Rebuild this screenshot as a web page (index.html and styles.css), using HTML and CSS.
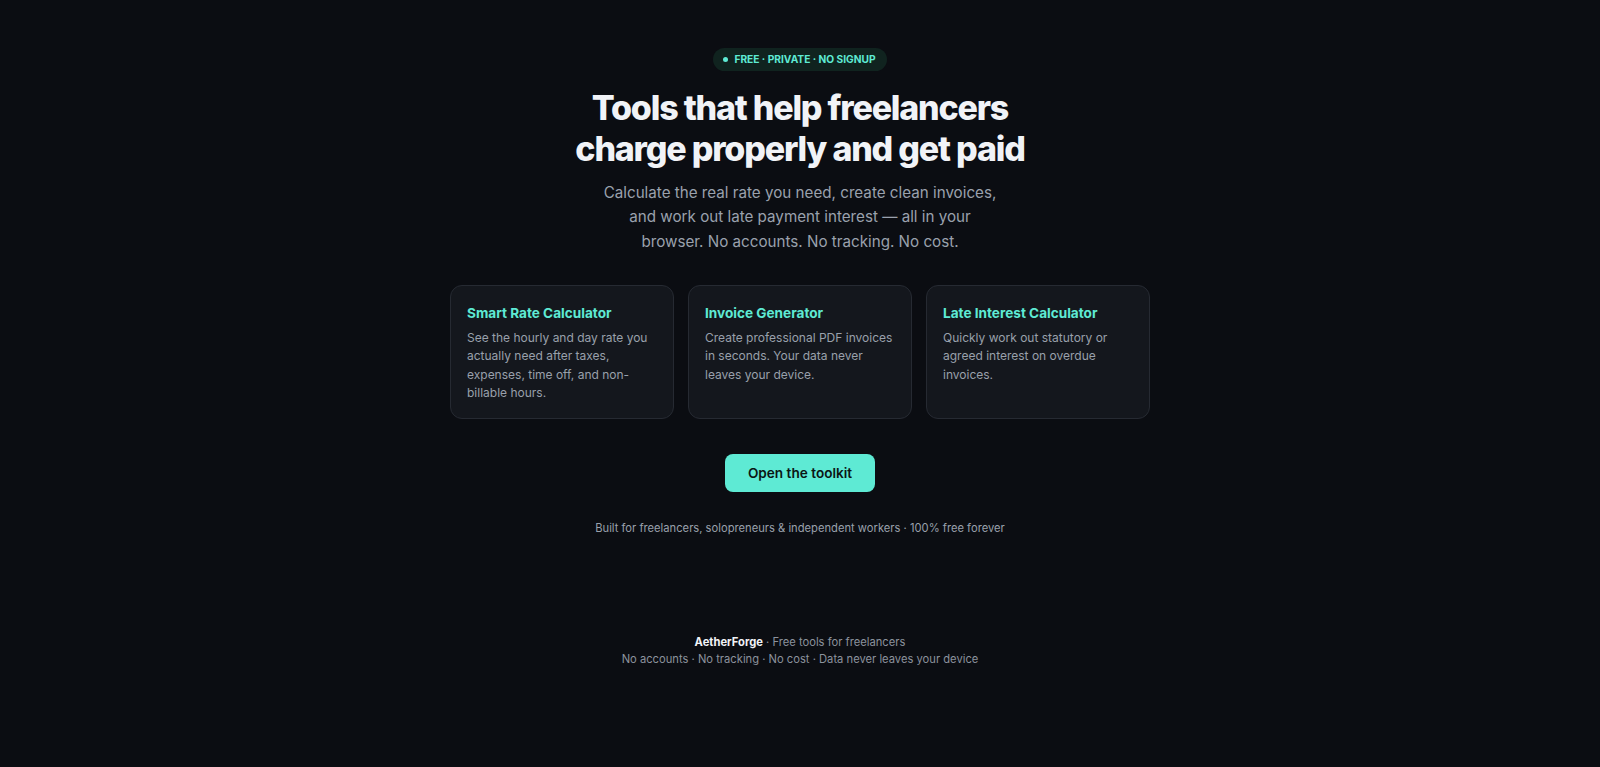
FILE: index.html
```html
<!DOCTYPE html>
<html lang="en">
<head>
<meta charset="utf-8">
<title>AetherForge</title>
<link rel="stylesheet" href="styles.css">
</head>
<body>
<div class="page">
  <main class="hero">
    <div class="badge"><span class="dot"></span>FREE · PRIVATE · NO SIGNUP</div>
    <h1 class="title">Tools that help freelancers<br>charge properly and get paid</h1>
    <p class="lead">Calculate the real rate you need, create clean invoices, and work out late payment interest — all in your browser. No accounts. No tracking. No cost.</p>
    <div class="cards">
      <div class="card">
        <h2 class="card-title">Smart Rate Calculator</h2>
        <p class="card-text">See the hourly and day rate you actually need after taxes, expenses, time off, and non-billable hours.</p>
      </div>
      <div class="card">
        <h2 class="card-title">Invoice Generator</h2>
        <p class="card-text">Create professional PDF invoices in seconds. Your data never leaves your device.</p>
      </div>
      <div class="card">
        <h2 class="card-title">Late Interest Calculator</h2>
        <p class="card-text">Quickly work out statutory or agreed interest on overdue invoices.</p>
      </div>
    </div>
    <a class="cta" href="#">Open the toolkit</a>
    <p class="tagline">Built for freelancers, solopreneurs &amp; independent workers · 100% free forever</p>
  </main>
  <footer class="footer">
    <p><strong>AetherForge</strong> · Free tools for freelancers</p>
    <p>No accounts · No tracking · No cost · Data never leaves your device</p>
  </footer>
</div>
</body>
</html>
```
FILE: styles.css
```css
html, body {
  margin: 0;
  padding: 0;
  background: #0b0d12;
}
body {
  font-family: Inter, "Noto Sans", sans-serif;
  color: #e6e8ec;
  min-height: 767px;
}
.page {
  display: flex;
  flex-direction: column;
  align-items: center;
}
.hero {
  display: flex;
  flex-direction: column;
  align-items: center;
  padding-top: 47.5px;
}
.badge {
  display: flex;
  align-items: center;
  gap: 6.5px;
  height: 23.5px;
  padding: 0 11.5px 0 10px;
  border-radius: 999px;
  background: #10231f;
  color: #5eead4;
  font-size: 10.2px;
  font-weight: 700;
  box-sizing: border-box;
}
.dot {
  width: 5px;
  height: 5px;
  border-radius: 50%;
  background: #5eead4;
}
.title {
  margin: 17.3px 0 0;
  font-size: 34px;
  line-height: 40.8px;
  font-weight: 800;
  letter-spacing: -1.2px;
  text-align: center;
  color: #f1f3f7;
}
.lead {
  margin: 10.8px 0 0;
  max-width: 400px;
  font-size: 15.2px;
  line-height: 24.4px;
  text-align: center;
  color: #9aa1ad;
}
.cards {
  margin-top: 31.5px;
  width: 700px;
  display: grid;
  grid-template-columns: repeat(3, 1fr);
  gap: 14px;
}
.card {
  padding: 17.5px 16px 15.5px;
  border: 1px solid #262a32;
  border-radius: 12px;
  background: #14171d;
}
.card-title {
  margin: 0;
  font-size: 13.6px;
  line-height: 19px;
  font-weight: 700;
  color: #5eead4;
}
.card-text {
  margin: 5.7px 0 0;
  font-size: 12px;
  line-height: 18.6px;
  color: #99a0ab;
}
.cta {
  margin-top: 34.8px;
  display: block;
  padding: 0 22.5px;
  height: 38px;
  line-height: 38px;
  border-radius: 8px;
  background: #5eead4;
  color: #0b1614;
  font-size: 13.6px;
  font-weight: 600;
  text-decoration: none;
}
.tagline {
  margin: 27.8px 0 0;
  font-size: 11.2px;
  line-height: 16.8px;
  color: #99a0ab;
}
.footer {
  margin-top: 97px;
  text-align: center;
  font-size: 11.2px;
  line-height: 17.4px;
  color: #8b929d;
}
.footer p {
  margin: 0;
}
.footer strong {
  color: #f1f3f7;
  font-weight: 700;
}
```
